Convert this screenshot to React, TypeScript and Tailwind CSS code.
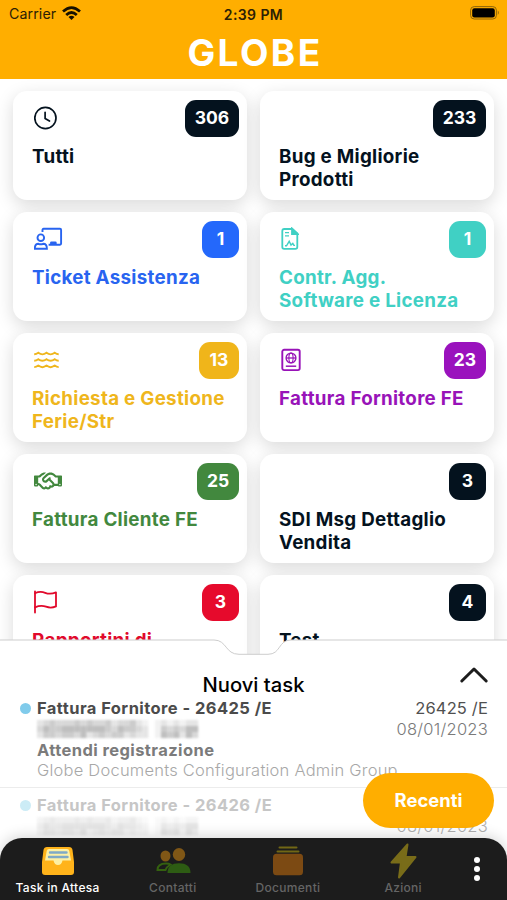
import type { ReactNode } from "react";
import { FaRegHandshake } from "react-icons/fa6";

const ClockIcon = () => (
  <svg width="24" height="24" viewBox="0 0 24 24" fill="none" stroke="currentColor" strokeWidth="1.7" strokeLinecap="round">
    <circle cx="11.4" cy="12" r="10.6" />
    <path d="M11.100 6.300V12.400L15.500 15" />
  </svg>
);
const FlagIcon = () => (
  <svg width="24" height="24" viewBox="0 0 24 24" fill="none" stroke="currentColor" strokeWidth="1.800" strokeLinecap="round" strokeLinejoin="round">
    <path d="M1 1.500V22.500" />
    <path d="M1 3.200Q6.200.8 11.200 2.800T22 2.400V16.400Q17 18.600 12 16.700T1 17.300" />
  </svg>
);
const TeacherIcon = () => (
  <svg width="30" height="24" viewBox="0 0 30 24" fill="none" stroke="currentColor" strokeWidth="1.9">
    <path d="M8.500 5V2.900Q8.500 1.800 9.600 1.800H26Q27.100 1.800 27.100 2.900V16.600Q27.100 17.700 26 17.700H14.600" />
    <path d="M16.100 18v-2.300q0-1.300 1.300-1.300h4q1.300 0 1.300 1.300V18z" fill="currentColor" stroke="none" />
    <circle cx="6.800" cy="10.700" r="3.300" />
    <path d="M.8 21.800q0-5 3.600-5 2.400 1 4.800 0 3.700 0 3.700 5z" />
  </svg>
);
const ContractIcon = () => (
  <svg width="18" height="24" viewBox="0 0 18 24" fill="none" stroke="currentColor" strokeWidth="1.8">
    <path d="M11 2H3.200Q1.300 2 1.300 3.900V20Q1.300 21.900 3.200 21.900H14.400Q16.300 21.900 16.300 20V6.500z" />
    <path d="M11 1.500V7.200H16.800z" fill="currentColor" />
    <path d="M4 5.600h4M4 8.800h4" strokeWidth="1.3" />
    <path d="M4 18.800H5.500L8.200 14.300 10 18l1.800-1.600 1.100 2H14" strokeWidth="1.4" />
  </svg>
);
const WavesIcon = () => (
  <svg width="26" height="24" viewBox="0 0 26 24" fill="none" stroke="currentColor" strokeWidth="1.9">
    {[5.3, 11.7, 18.1].map((y) => (
      <path key={y} d={`M.2 ${y + 1}q2.1 0 4.100-1.500 2.100 1.600 4.100 1.600t4.100-1.600q2.100 1.600 4.100 1.600t4.100-1.600q2 1.500 4 1.500`} />
    ))}
  </svg>
);
const PassportIcon = () => (
  <svg width="20" height="24" viewBox="0 0 20 24" fill="none" stroke="currentColor" strokeWidth="1.9">
    <rect x="1.3" y="1.8" width="17.4" height="20.3" rx="1.8" />
    <circle cx="10" cy="10" r="4.9" strokeWidth="1.4" />
    <ellipse cx="10" cy="10" rx="2.1" ry="4.9" strokeWidth="1.1" />
    <path d="M5.200 10h9.600" strokeWidth="1.3" />
    <path d="M4.800 18.200h10.400" strokeWidth="1.5" />
  </svg>
);

type Card = { title: string[]; count: string; text: string; badge: string; icon?: ReactNode };

const cards: Card[] = [
  { title: ["Tutti"], count: "306", text: "text-[#04121e]", badge: "bg-[#04121e] w-[54px]", icon: <ClockIcon /> },
  { title: ["Bug e Migliorie", "Prodotti"], count: "233", text: "text-[#04121e]", badge: "bg-[#04121e] w-[53px]" },
  { title: ["Ticket Assistenza"], count: "1", text: "text-[#2864f0]", badge: "bg-[#2468fb] w-[37px]", icon: <TeacherIcon /> },
  { title: ["Contr. Agg.", "Software e Licenza"], count: "1", text: "text-[#40d0c4]", badge: "bg-[#40d0c4] w-[37px]", icon: <ContractIcon /> },
  { title: ["Richiesta e Gestione", "Ferie/Str"], count: "13", text: "text-[#efb61c]", badge: "bg-[#f0b51a] w-[40px]", icon: <WavesIcon /> },
  { title: ["Fattura Fornitore FE"], count: "23", text: "text-[#9813b8]", badge: "bg-[#9a12bd] w-[42px]", icon: <PassportIcon /> },
  { title: ["Fattura Cliente FE"], count: "25", text: "text-[#42883e]", badge: "bg-[#42883e] w-[42px]", icon: <FaRegHandshake size={28} /> },
  { title: ["SDI Msg Dettaglio", "Vendita"], count: "3", text: "text-[#04121e]", badge: "bg-[#04121e] w-[37px]" },
  { title: ["Rapportini di"], count: "3", text: "text-[#e1092b]", badge: "bg-[#e60a2c] w-[37px]", icon: <FlagIcon /> },
  { title: ["Test"], count: "4", text: "text-[#04121e]", badge: "bg-[#04121e] w-[37px]" },
];

const TaskCard = ({ card }: { card: Card }) => (
  <div className={`h-[109px] rounded-[14px] bg-white pl-[19px] pr-[8px] pt-[8.500px] shadow-[0_5px_17px_rgba(0,0,0,0.15)] ${card.text}`}>
    <div className="flex h-[37px] justify-between">
      <div className="flex h-[37px] items-center pl-[1.500px]">{card.icon}</div>
      <div className={`flex h-[37px] items-center justify-center rounded-[11px] pt-px text-[17.500px] font-bold text-white ${card.badge}`}>
        {card.count}
      </div>
    </div>
    <div className="mt-[8.400px] whitespace-nowrap text-[18.800px] font-bold leading-[23.300px] tracking-[0.280px]">
      {card.title.map((line) => (
        <div key={line}>{line}</div>
      ))}
    </div>
  </div>
);

/* Obscured customer name: columns of grey tiles. */
const tiles = [
  "dcd", "cab", "bbb", "cbc", "cab", "cab", "bac", "caa", "bad", "cac", "cab", "bbc", "dcb", "cab", "cbd", "bbc",
  "dcd", "edd", "fff", "eee", "dba", "ecb", "dba", "ecd", "daa", "dac",
];
const Redacted = () => (
  <svg width="162" height="21" className="blur-[1.300px]">
    {tiles.flatMap((col, i) =>
      col.split("").map((c, j) => <rect key={`${i}-${j}`} x={i * 6.2} y={1 + j * 6} width="6.3" height="6.1" fill={`#${c}${c}${c}`} />)
    )}
  </svg>
);

const InboxIcon = () => (
  <svg width="34" height="30" viewBox="0 0 34 30">
    <path d="M6 1h22q3 0 3.500 3L33 16v10q0 3-3 3H4q-3 0-3-3V16L2.500 4Q3 1 6 1z" fill="#ffb31a" />
    <path d="M8 3h18q2 0 2.300 2L30 14.500H21.500Q20.500 19 17 19t-4.500-4.500H4L5.700 5Q6 3 8 3z" fill="#fdf0a4" />
    <path d="M9 6.500h16.500M8 11h18.500" stroke="#7fa9c6" strokeWidth="2.400" strokeLinecap="round" />
  </svg>
);
const PeopleIcon = () => (
  <svg width="36" height="28" viewBox="0 0 36 28">
    <ellipse cx="10.500" cy="9" rx="5" ry="5.500" fill="#805716" />
    <ellipse cx="24" cy="7.500" rx="6.200" ry="6.500" fill="#805716" />
    <path d="M2.500 23q0-6.500 8.500-6.500 3 0 4.500 1-4 2.500-5 5.500z" fill="none" stroke="#34610f" strokeWidth="2" />
    <path d="M12.500 26q0-9.800 11.500-9.800T35.500 26z" fill="#2d5c13" />
  </svg>
);
const FoldersIcon = () => (
  <svg width="32" height="30" viewBox="0 0 32 30">
    <path d="M7.500 1.500h17M5.500 5.500h21" stroke="#716715" strokeWidth="2" strokeLinecap="round" />
    <rect x="1" y="7.800" width="30" height="21.500" rx="3.500" fill="#7c4a13" />
  </svg>
);
const BoltIcon = () => (
  <svg width="27" height="36" viewBox="0 0 27 36">
    <path d="M17.500 1.500 1.500 19.500h9.500L9 34.500 25.500 14H15.500z" fill="#796c19" stroke="#796c19" strokeWidth="2" strokeLinejoin="round" />
  </svg>
);

const tabs = [
  { label: "Task in Attesa", icon: <InboxIcon />, color: "text-white" },
  { label: "Contatti", icon: <PeopleIcon />, color: "text-[#656565]" },
  { label: "Documenti", icon: <FoldersIcon />, color: "text-[#656565]" },
  { label: "Azioni", icon: <BoltIcon />, color: "text-[#656565]" },
];

export default function App() {
  return (
    <div className="flex h-[900px] w-[507px] flex-col overflow-hidden bg-white font-['Inter','Liberation_Sans',sans-serif]">
      <header className="relative z-10 h-[79px] shrink-0 bg-[#ffae00]">
        <div className="grid h-[28px] grid-cols-3 items-center pl-[9px] pr-[7px] text-[#2b2005]">
          <div className="flex items-center gap-[6px] text-[14.200px] tracking-[0.100px]">
            Carrier
            <svg width="19" height="15" viewBox="0 0 19 15" fill="none" stroke="#171100" strokeWidth="2.700">
              <path d="M1 5.500Q9.500-2.400 18 5.500" />
              <path d="M4.200 9Q9.500 4 14.800 9" />
              <path d="M9.500 14 6.500 11Q9.500 8.500 12.500 11z" fill="#171100" stroke="none" />
            </svg>
          </div>
          <div className="pr-[2px] text-center text-[14px] font-semibold tracking-[0.400px]">2:39 PM</div>
          <svg className="-mt-[2px] justify-self-end" width="30" height="14" viewBox="0 0 30 14">
            <rect x=".6" y=".6" width="25.800" height="12.400" rx="3.600" fill="none" stroke="#8e6508" />
            <rect x="2.200" y="2.200" width="22.600" height="9.200" rx="2.200" fill="#000" />
            <path d="M27.800 4.600q2 2.200 0 4.400z" fill="#8e6508" />
          </svg>
        </div>
        <div className="flex h-[48px] items-center justify-center pl-[3px] text-[37px] font-bold leading-none tracking-[2.400px] text-white">GLOBE</div>
      </header>

      <main className="h-[576px] shrink-0 overflow-hidden px-[13px] pt-[12px]">
        <div className="grid grid-cols-2 gap-x-[13px] gap-y-[12px]">
          {cards.map((card, i) => (
            <TaskCard key={i} card={card} />
          ))}
        </div>
      </main>

      <section className="relative -mt-[16px] flex h-[261px] shrink-0 flex-col">
        <svg width="507" height="17" viewBox="0 0 507 17" className="block shrink-0">
          <path d="M-2 1H214C227 1 225 15.300 239 15.300H268C281 15.300 278 1 291 1H509V20H-2z" fill="#fff" stroke="#cdcdcd" />
        </svg>
        <div className="flex flex-1 flex-col bg-white">
          <div className="grid h-[42px] grid-cols-[1fr_auto_1fr] text-black">
            <span />
            <h2 className="pt-[15px] text-[20.200px] font-medium leading-[28px]">Nuovi task</h2>
            <svg className="mr-[18px] mt-[10px] justify-self-end" width="30" height="18" viewBox="0 0 30 18" fill="none" stroke="#1d1d1d" strokeWidth="3" strokeLinecap="round" strokeLinejoin="round">
              <path d="M2.800 15 15 3 27.200 15" />
            </svg>
          </div>
          <div className="flex h-[90px] justify-between border-b border-[#ececec] pl-[20px] pr-[19px] text-[16.500px] leading-[20.800px]">
            <div className="flex gap-[6px]">
              <span className="mt-[5px] size-[11px] rounded-full bg-[#80cbeb]" />
              <div className="whitespace-nowrap">
                <div className="font-bold tracking-[0.430px] text-[#4b4b4b]">Fattura Fornitore - 26425 /E</div>
                <div className="h-[20.800px] opacity-75"><Redacted /></div>
                <div className="font-bold tracking-[0.420px] text-[#7b7b7b]">Attendi registrazione</div>
                <div className="font-light tracking-[0.220px] text-[#a8a8a8]">Globe Documents Configuration Admin Group</div>
              </div>
            </div>
            <div className="-ml-[30px] whitespace-nowrap text-right">
              <div className="tracking-[0.150px] text-[#505050]">26425 /E</div>
              <div className="font-light tracking-[0.250px] text-[#7a7a7a]">08/01/2023</div>
            </div>
          </div>
          <div className="flex justify-between pl-[20px] pr-[19px] pt-[7px] text-[16.500px] leading-[20.700px]">
            <div className="flex gap-[6px]">
              <span className="mt-[5px] size-[11px] rounded-full bg-[#ccecf6]" />
              <div>
                <div className="font-bold tracking-[0.430px] text-[#c6c6c6]">Fattura Fornitore - 26426 /E</div>
                <div className="h-[20.700px] opacity-30"><Redacted /></div>
              </div>
            </div>
            <div className="pt-[20.700px] font-light tracking-[0.250px] text-[#b0b0b0]">08/01/2023</div>
          </div>
        </div>
        <button className="absolute right-[13px] top-[134px] h-[55px] w-[131px] rounded-full bg-[#ffae00] pt-px text-[18.400px] font-bold text-white">Recenti</button>
        <nav className="absolute bottom-0 left-0 flex h-[62px] w-full rounded-t-[22px] bg-[#1c1c1c] shadow-[0_-2px_14px_rgba(0,0,0,0.16)]">
          {tabs.map((tab) => (
            <div key={tab.label} className={`flex w-[115.200px] flex-col items-center ${tab.color}`}>
              <div className="flex h-[42px] items-center justify-center pt-[3px]">{tab.icon}</div>
              <span className="text-[12px] font-medium leading-[15px] tracking-[0.300px]">{tab.label}</span>
            </div>
          ))}
          <div className="flex flex-1 flex-col items-center gap-[3px] pr-[13px] pt-[19px]">
            <span className="size-[6px] rounded-full bg-white" />
            <span className="size-[6px] rounded-full bg-white" />
            <span className="size-[6px] rounded-full bg-white" />
          </div>
        </nav>
      </section>
    </div>
  );
}
